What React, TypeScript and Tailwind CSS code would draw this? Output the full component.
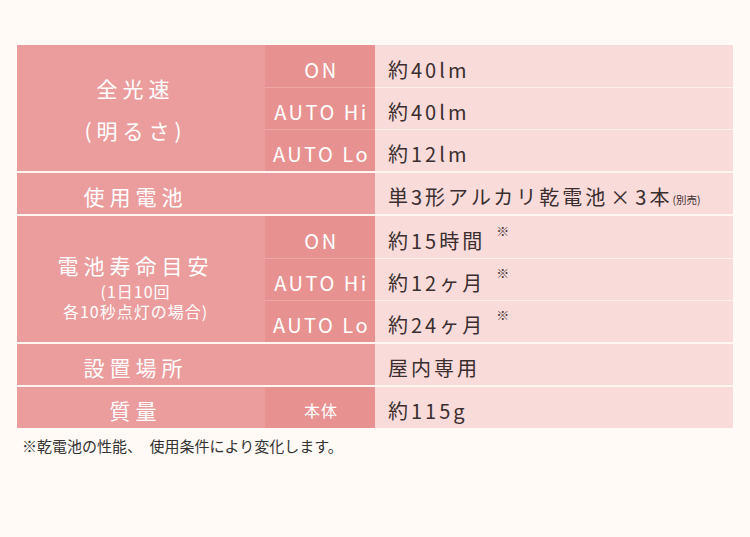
import React from 'react'

const font = { fontFamily: '"Noto Sans CJK JP", "Noto Sans", sans-serif' }

type Sub = { mode: string; value: React.ReactNode; note?: boolean }

function Note() {
  return <span className="relative -top-[10px] ml-[11px] text-[13px] tracking-normal text-[#4a3c3c]">※</span>
}

function SubRow({ sub, first }: { sub: Sub; first: boolean }) {
  return (
    <div className="flex h-[42px]">
      <div
        className={`flex w-[110px] items-center justify-center bg-[#e89191] pt-[7px] pl-[3px] text-[20px] tracking-[2.5px] text-white ${
          first ? '' : 'border-t border-[#eea6a6]'
        }`}
      >
        {sub.mode}
      </div>
      <div
        className={`flex flex-1 items-center bg-[#f9dbda] pt-[7px] pl-[13px] text-[20px] tracking-[3px] text-[#3a2e2e] ${
          first ? '' : 'border-t border-[#fdefee]'
        }`}
      >
        {sub.value}
        {sub.note && <Note />}
      </div>
    </div>
  )
}

function Group({ label, subs }: { label: React.ReactNode; subs: Sub[] }) {
  return (
    <div className="flex">
      <div className="flex w-[248px] flex-col items-center justify-center bg-[#eb9d9e] pr-[11px] text-white">
        {label}
      </div>
      <div className="flex flex-1 flex-col">
        {subs.map((s, i) => (
          <SubRow key={i} sub={s} first={i === 0} />
        ))}
      </div>
    </div>
  )
}

function Single({ label, mode, value }: { label: string; mode?: string; value: React.ReactNode }) {
  return (
    <div className="flex h-[41px]">
      <div className="flex w-[248px] items-center justify-center bg-[#eb9d9e] pt-[7px] pr-[11px] text-[21px] tracking-[5px] text-white">
        {label}
      </div>
      <div
        className={`flex w-[110px] items-center justify-center pt-[5px] pl-[2px] text-[16px] tracking-[1px] text-white ${
          mode ? 'bg-[#e89191]' : 'bg-[#eb9d9e]'
        }`}
      >
        {mode}
      </div>
      <div className="flex flex-1 items-center bg-[#f9dbda] pt-[7px] pl-[13px] text-[20px] tracking-[3px] text-[#3a2e2e]">
        {value}
      </div>
    </div>
  )
}

export default function App() {
  return (
    <div className="min-h-[537px] w-[750px] bg-[#fffaf5] px-[17px] pt-[45px]" style={font}>
      <div className="flex w-[716px] flex-col gap-[2px] bg-[#fff6f2]">
        <Group
          label={
            <div className="pt-[2px] text-center text-[21px] leading-[42px] tracking-[5px]">
              <div>全光速</div>
              <div>(明るさ)</div>
            </div>
          }
          subs={[
            { mode: 'ON', value: '約40lm' },
            { mode: 'AUTO Hi', value: '約40lm' },
            { mode: 'AUTO Lo', value: '約12lm' },
          ]}
        />
        <Single
          label="使用電池"
          value={
            <>
              単3形アルカリ乾電池
              <span className="mx-[2px]">×</span>3本
              <span className="mt-[6px] text-[10.5px] tracking-normal">(別売)</span>
            </>
          }
        />
        <Group
          label={
            <div className="pt-[12px] text-center">
              <div className="text-[21px] leading-[30px] tracking-[5px]">電池寿命目安</div>
              <div className="mt-[1px] text-[16px] leading-[20px] tracking-[1px]">
                <div>(1日10回</div>
                <div>各10秒点灯の場合)</div>
              </div>
            </div>
          }
          subs={[
            { mode: 'ON', value: '約15時間', note: true },
            { mode: 'AUTO Hi', value: '約12ヶ月', note: true },
            { mode: 'AUTO Lo', value: '約24ヶ月', note: true },
          ]}
        />
        <Single label="設置場所" value="屋内専用" />
        <Single label="質量" mode="本体" value="約115g" />
      </div>
      <p className="mt-[8px] pl-[5px] text-[15px] leading-[20px] text-[#333333]">
        ※乾電池の性能、　使用条件により変化します。
      </p>
    </div>
  )
}
